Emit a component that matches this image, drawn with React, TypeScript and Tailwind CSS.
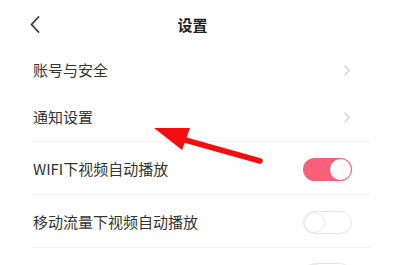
import React from "react";

function Chevron() {
  return (
    <svg width="6" height="11" viewBox="0 0 6 11" className="mr-[20px]">
      <path d="M1 1 L5 5.5 L1 10" fill="none" stroke="#d0d0d0" strokeWidth="1.3" strokeLinecap="round" strokeLinejoin="round" />
    </svg>
  );
}

function Toggle({ on }: { on: boolean }) {
  return on ? (
    <div className="mr-[18px] flex h-[23px] w-[49px] items-center justify-end rounded-full bg-[#fa6079] pr-[1px]">
      <div className="h-[21px] w-[21px] rounded-full bg-white" />
    </div>
  ) : (
    <div className="mr-[18px] flex h-[23px] w-[49px] items-center justify-start rounded-full border border-[#e6e6e6] bg-white">
      <div className="h-[21px] w-[21px] rounded-full border border-[#e6e6e6] bg-white" />
    </div>
  );
}

export default function App() {
  const font = { fontFamily: '"Noto Sans CJK SC", "Noto Sans", sans-serif' };
  return (
    <div className="relative h-[265px] w-[403px] overflow-hidden bg-white text-[#333]" style={font}>
      <div className="relative flex h-[46px] items-center justify-center pr-[18px]">
        <svg width="10" height="17" viewBox="0 0 10 17" className="absolute left-[30px] top-[16px]">
          <path d="M8.5 1 L1.5 8.5 L8.5 16" fill="none" stroke="#333" strokeWidth="1.8" strokeLinecap="round" strokeLinejoin="round" />
        </svg>
        <span className="mt-[4px] text-[15px] font-bold text-[#222]">设置</span>
      </div>
      <div className="px-[33px]">
        <div className="flex h-[48px] items-center justify-between">
          <span className="text-[15px]">账号与安全</span>
          <Chevron />
        </div>
        <div className="flex h-[48px] items-center justify-between border-b border-[#f2f2f2]">
          <span className="text-[15px]">通知设置</span>
          <Chevron />
        </div>
        <div className="flex h-[53px] items-center justify-between border-b border-[#f2f2f2] pt-[2px]">
          <span className="text-[15px]">WIFI下视频自动播放</span>
          <Toggle on />
        </div>
        <div className="flex h-[53px] items-center justify-between border-b border-[#f2f2f2] pt-[2px]">
          <span className="text-[15px]">移动流量下视频自动播放</span>
          <Toggle on={false} />
        </div>
        <div className="flex h-[53px] items-center justify-between">
          <span className="text-[15px]"></span>
          <Toggle on={false} />
        </div>
      </div>
      <svg className="pointer-events-none absolute left-0 top-0" width="403" height="265" viewBox="0 0 403 265">
        <line x1="178" y1="138" x2="260" y2="161" stroke="#f40f0f" strokeWidth="5.5" strokeLinecap="round" />
        <polygon points="154,128 190,128 182,150" fill="#f40f0f" />
      </svg>
    </div>
  );
}
